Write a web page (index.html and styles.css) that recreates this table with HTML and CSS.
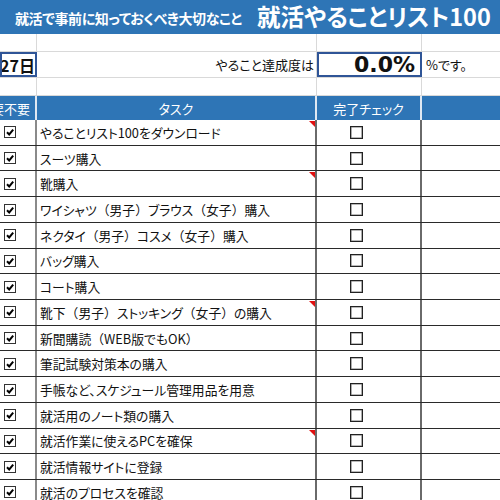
FILE: index.html
```html
<!DOCTYPE html>
<html lang="ja">
<head>
<meta charset="utf-8">
<title>就活やることリスト100</title>
<link rel="stylesheet" href="styles.css">
</head>
<body>
<div class="page">
  <header class="title">
    <span class="sub">就活で事前に知っておくべき大切なこと</span>
    <span class="main">就活やることリスト100</span>
  </header>

  <div class="row blank"><div class="c c1"></div><div class="c c2"></div><div class="c c3"></div><div class="c c4"></div></div>

  <div class="row info">
    <div class="c c1 date"><span>27日</span></div>
    <div class="c c2 label">やること達成度は</div>
    <div class="c c3 pct">0.0%</div>
    <div class="c c4 unit">%です。</div>
  </div>

  <div class="row blank"><div class="c c1"></div><div class="c c2"></div><div class="c c3"></div><div class="c c4"></div></div>

  <div class="row head">
    <div class="c c1"><span>要不要</span></div>
    <div class="c c2">タスク</div>
    <div class="c c3">完了チェック</div>
    <div class="c c4"></div>
  </div>

  <div class="row data"><div class="c c1"><span class="chk"><svg viewBox="0 0 10 10"><path d="M2 5.2 L4.2 7.4 L8.2 2.6"/></svg></span></div><div class="c c2 note">やることリスト100をダウンロード</div><div class="c c3"><span class="box"></span></div><div class="c c4"></div></div>
  <div class="row data"><div class="c c1"><span class="chk"><svg viewBox="0 0 10 10"><path d="M2 5.2 L4.2 7.4 L8.2 2.6"/></svg></span></div><div class="c c2">スーツ購入</div><div class="c c3"><span class="box"></span></div><div class="c c4"></div></div>
  <div class="row data"><div class="c c1"><span class="chk"><svg viewBox="0 0 10 10"><path d="M2 5.2 L4.2 7.4 L8.2 2.6"/></svg></span></div><div class="c c2 note">靴購入</div><div class="c c3"><span class="box"></span></div><div class="c c4"></div></div>
  <div class="row data"><div class="c c1"><span class="chk"><svg viewBox="0 0 10 10"><path d="M2 5.2 L4.2 7.4 L8.2 2.6"/></svg></span></div><div class="c c2">ワイシャツ<span class="fw">（</span>男子<span class="fw">）</span>ブラウス<span class="fw">（</span>女子<span class="fw">）</span>購入</div><div class="c c3"><span class="box"></span></div><div class="c c4"></div></div>
  <div class="row data"><div class="c c1"><span class="chk"><svg viewBox="0 0 10 10"><path d="M2 5.2 L4.2 7.4 L8.2 2.6"/></svg></span></div><div class="c c2">ネクタイ<span class="fw">（</span>男子<span class="fw">）</span>コスメ<span class="fw">（</span>女子<span class="fw">）</span>購入</div><div class="c c3"><span class="box"></span></div><div class="c c4"></div></div>
  <div class="row data"><div class="c c1"><span class="chk"><svg viewBox="0 0 10 10"><path d="M2 5.2 L4.2 7.4 L8.2 2.6"/></svg></span></div><div class="c c2">バッグ購入</div><div class="c c3"><span class="box"></span></div><div class="c c4"></div></div>
  <div class="row data"><div class="c c1"><span class="chk"><svg viewBox="0 0 10 10"><path d="M2 5.2 L4.2 7.4 L8.2 2.6"/></svg></span></div><div class="c c2">コート購入</div><div class="c c3"><span class="box"></span></div><div class="c c4"></div></div>
  <div class="row data"><div class="c c1"><span class="chk"><svg viewBox="0 0 10 10"><path d="M2 5.2 L4.2 7.4 L8.2 2.6"/></svg></span></div><div class="c c2 note">靴下<span class="fw">（</span>男子<span class="fw">）</span>ストッキング<span class="fw">（</span>女子<span class="fw">）</span>の購入</div><div class="c c3"><span class="box"></span></div><div class="c c4"></div></div>
  <div class="row data"><div class="c c1"><span class="chk"><svg viewBox="0 0 10 10"><path d="M2 5.2 L4.2 7.4 L8.2 2.6"/></svg></span></div><div class="c c2">新聞購読<span class="fw">（</span>WEB版でもOK<span class="fw">）</span></div><div class="c c3"><span class="box"></span></div><div class="c c4"></div></div>
  <div class="row data"><div class="c c1"><span class="chk"><svg viewBox="0 0 10 10"><path d="M2 5.2 L4.2 7.4 L8.2 2.6"/></svg></span></div><div class="c c2">筆記試験対策本の購入</div><div class="c c3"><span class="box"></span></div><div class="c c4"></div></div>
  <div class="row data"><div class="c c1"><span class="chk"><svg viewBox="0 0 10 10"><path d="M2 5.2 L4.2 7.4 L8.2 2.6"/></svg></span></div><div class="c c2">手帳など、スケジュール管理用品を用意</div><div class="c c3"><span class="box"></span></div><div class="c c4"></div></div>
  <div class="row data"><div class="c c1"><span class="chk"><svg viewBox="0 0 10 10"><path d="M2 5.2 L4.2 7.4 L8.2 2.6"/></svg></span></div><div class="c c2">就活用のノート類の購入</div><div class="c c3"><span class="box"></span></div><div class="c c4"></div></div>
  <div class="row data"><div class="c c1"><span class="chk"><svg viewBox="0 0 10 10"><path d="M2 5.2 L4.2 7.4 L8.2 2.6"/></svg></span></div><div class="c c2 note">就活作業に使えるPCを確保</div><div class="c c3"><span class="box"></span></div><div class="c c4"></div></div>
  <div class="row data"><div class="c c1"><span class="chk"><svg viewBox="0 0 10 10"><path d="M2 5.2 L4.2 7.4 L8.2 2.6"/></svg></span></div><div class="c c2">就活情報サイトに登録</div><div class="c c3"><span class="box"></span></div><div class="c c4"></div></div>
  <div class="row data"><div class="c c1"><span class="chk"><svg viewBox="0 0 10 10"><path d="M2 5.2 L4.2 7.4 L8.2 2.6"/></svg></span></div><div class="c c2">就活のプロセスを確認</div><div class="c c3"><span class="box"></span></div><div class="c c4"></div></div>
</div>
</body>
</html>
```

FILE: styles.css
```css
html, body {
  margin: 0;
  padding: 0;
  background: #fff;
}
body {
  font-family: "Noto Sans CJK JP", "Noto Sans", sans-serif;
  font-feature-settings: "palt";
  color: #111;
  overflow: hidden;
}
.fw {
  font-feature-settings: normal;
}
.page {
  width: 500px;
  height: 500px;
  overflow: hidden;
}
.title {
  height: 34px;
  background: #2e75b6;
  color: #fff;
  font-weight: bold;
  display: flex;
  align-items: center;
  white-space: nowrap;
  overflow: hidden;
}
.title .sub {
  flex: 0 0 257px;
  box-sizing: border-box;
  padding-left: 15px;
  font-size: 14px;
  letter-spacing: -0.4px;
  line-height: 1;
  padding-top: 2px;
}
.title .main {
  flex: none;
  font-size: 23.5px;
  line-height: 1;
}
.row {
  display: grid;
  grid-template-columns: 37px 280px 105px 1fr;
  box-sizing: border-box;
}
.c {
  box-sizing: border-box;
  min-width: 0;
  overflow: hidden;
  white-space: nowrap;
}
/* light gridline rows */
.blank {
  height: 18px;
  border-bottom: 1px solid #d9d9d9;
}
.blank .c {
  border-right: 1px solid #d9d9d9;
}
.blank .c4 { border-right: 0; }
.info {
  height: 26px;
  border-bottom: 1px solid #d9d9d9;
  font-size: 13px;
}
.info .c {
  display: flex;
  align-items: center;
  border-right: 1px solid #d9d9d9;
}
.info .date {
  border: 2px solid #2f5597;
  justify-content: flex-end;
  font-weight: bold;
  font-size: 16px;
  font-feature-settings: normal;
}
.info .date span { flex: none; }
.info .label {
  justify-content: flex-end;
  padding-right: 2px;
}
.info .pct {
  border: 2px solid #2f5597;
  justify-content: flex-end;
  padding-right: 5px;
  font-family: "DejaVu Sans", sans-serif;
  font-weight: bold;
  font-size: 22px;
}
.info .unit {
  padding-left: 4px;
  border-right: 0;
}
/* header */
.head {
  height: 24px;
  background: #2e75b6;
  color: #fff;
  font-size: 13px;
}
.head .c {
  display: flex;
  align-items: center;
  justify-content: center;
  border-right: 2px solid #dfe8f3;
}
.head .c1 {
  justify-content: flex-end;
  padding-right: 5px;
}
.head .c1 span { flex: none; }
.head .c4 { border-right: 0; }
/* data rows */
.data {
  height: 25.72px;
  border-bottom: 1px solid #2a2a2a;
  font-size: 12.8px;
}
.data .c {
  display: flex;
  align-items: center;
}
.data .c1 {
  border-right: 2px solid #8a8a8a;
  padding-left: 4px;
}
.data .c2 {
  position: relative;
  border-right: 2px solid #6a6a6a;
  padding-left: 3px;
}
.data .c3 {
  border-right: 2px solid #6a6a6a;
  padding-left: 33px;
}
.note::after {
  content: "";
  position: absolute;
  top: 1px;
  right: 0;
  border-left: 6px solid transparent;
  border-top: 6px solid #e01010;
}
.chk {
  width: 12px;
  height: 12px;
  box-sizing: border-box;
  border: 1px solid #333;
  background: #fff;
  display: flex;
}
.chk svg {
  width: 10px;
  height: 10px;
  fill: none;
  stroke: #000;
  stroke-width: 2;
}
.box {
  width: 13px;
  height: 13px;
  box-sizing: border-box;
  border: 1px solid #222;
  box-shadow: inset 0 0 0 0.6px #777;
  background: #fff;
}
```
